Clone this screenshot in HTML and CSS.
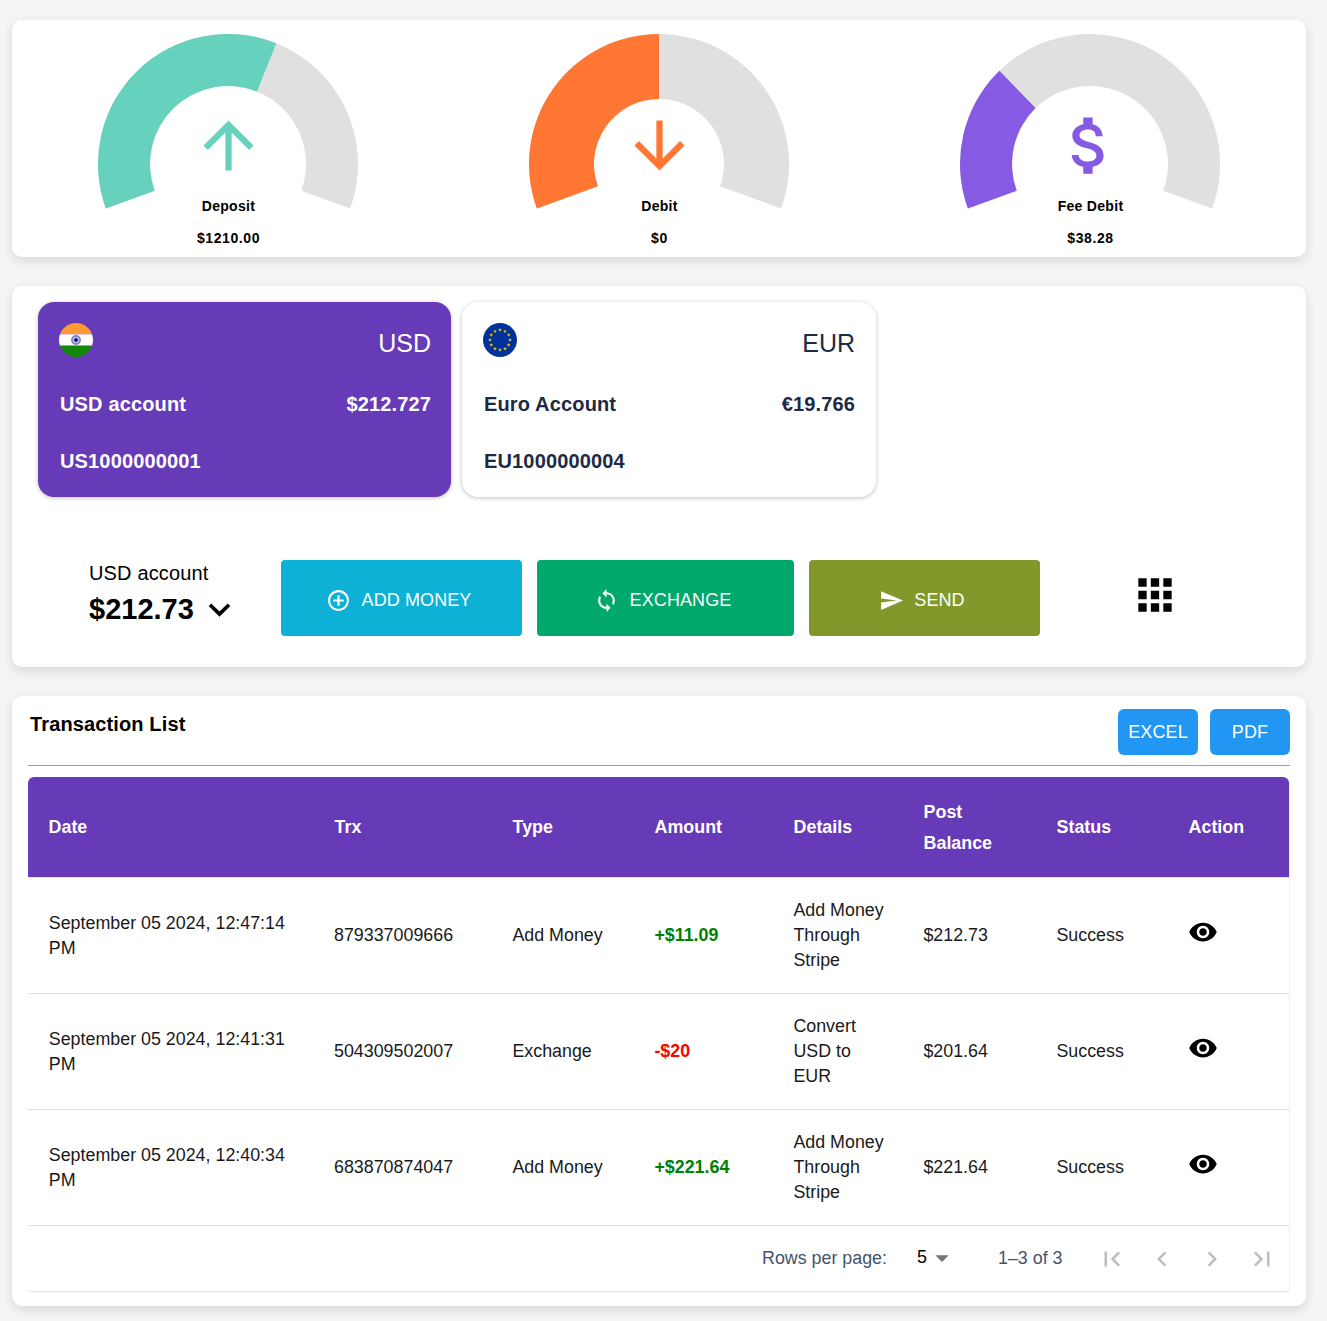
FILE: index.html
```html
<!DOCTYPE html>
<html lang="en">
<head>
<meta charset="utf-8">
<title>Dashboard</title>
<link rel="stylesheet" href="styles.css">
</head>
<body>
<main class="page">
  <section class="card gauges">
    <div class="gauge">
      <svg class="gauge-svg" viewBox="0 0 260 175" width="260" height="175">
        <path class="track" d="M7.84 174.46A130 130 0 1 1 252.16 174.46L203.3 156.68A78 78 0 1 0 56.7 156.68Z"/>
        <path class="fill-teal" d="M7.84 174.46A130 130 0 0 1 178.3 9.3L158.96 57.6A78 78 0 0 0 56.7 156.68Z"/>
      </svg>
      <svg class="gauge-icon icon-teal" viewBox="0 0 24 24"><path d="M4 12l1.41 1.41L11 7.83V20h2V7.83l5.58 5.59L20 12l-8-8-8 8z"/></svg>
      <p class="gauge-label">Deposit</p>
      <p class="gauge-value">$1210.00</p>
    </div>
    <div class="gauge">
      <svg class="gauge-svg" viewBox="0 0 260 175" width="260" height="175">
        <path class="track" d="M7.84 174.46A130 130 0 1 1 252.16 174.46L191.08 152.23A65 65 0 1 0 68.92 152.23Z"/>
        <path class="fill-orange" d="M7.84 174.46A130 130 0 0 1 130 0L130 65A65 65 0 0 0 68.92 152.23Z"/>
      </svg>
      <svg class="gauge-icon icon-orange" viewBox="0 0 24 24"><path d="M20 12l-1.41-1.41L13 16.17V4h-2v12.17l-5.58-5.59L4 12l8 8 8-8z"/></svg>
      <p class="gauge-label">Debit</p>
      <p class="gauge-value">$0</p>
    </div>
    <div class="gauge">
      <svg class="gauge-svg" viewBox="0 0 260 175" width="260" height="175">
        <path class="track" d="M7.84 174.46A130 130 0 1 1 252.16 174.46L203.3 156.68A78 78 0 1 0 56.7 156.68Z"/>
        <path class="fill-purple" d="M7.84 174.46A130 130 0 0 1 39.4 36.8L75.6 74.1A78 78 0 0 0 56.7 156.68Z"/>
      </svg>
      <svg class="gauge-icon icon-purple" viewBox="0 0 24 24"><path d="M11.8 10.9c-2.27-.59-3-1.2-3-2.15 0-1.09 1.01-1.85 2.7-1.85 1.78 0 2.44.85 2.5 2.1h2.21c-.07-1.72-1.12-3.3-3.21-3.81V3h-3v2.16c-1.94.42-3.5 1.68-3.5 3.61 0 2.31 1.91 3.46 4.7 4.13 2.5.6 3 1.48 3 2.41 0 .69-.49 1.79-2.7 1.79-2.06 0-2.87-.92-2.98-2.1h-2.2c.12 2.19 1.76 3.42 3.68 3.83V21h3v-2.15c1.95-.37 3.5-1.5 3.5-3.55 0-2.84-2.43-3.81-4.7-4.4z"/></svg>
      <p class="gauge-label">Fee Debit</p>
      <p class="gauge-value">$38.28</p>
    </div>
  </section>

  <section class="card wallet">
    <div class="accounts">
      <article class="account account-active">
        <div class="account-top">
          <svg class="flag" viewBox="0 0 34 34">
            <defs><clipPath id="flag-in"><circle cx="17" cy="17" r="17"/></clipPath></defs>
            <g clip-path="url(#flag-in)">
              <rect width="34" height="11.3" fill="#ff9933"/>
              <rect y="11.3" width="34" height="11.4" fill="#ffffff"/>
              <rect y="22.7" width="34" height="11.3" fill="#138808"/>
            </g>
            <circle cx="17" cy="17" r="4.9" fill="#7f7fc4"/>
            <circle cx="17" cy="17" r="3.3" fill="#b8b8e0"/>
            <circle cx="17" cy="17" r="1.8" fill="#000080"/>
          </svg>
          <span class="account-code">USD</span>
        </div>
        <div class="account-row"><span>USD account</span><span>$212.727</span></div>
        <div class="account-row account-number"><span>US1000000001</span></div>
      </article>
      <article class="account account-plain">
        <div class="account-top">
          <svg class="flag" viewBox="0 0 34 34">
            <defs><polygon id="eu-star" points="0,-2 .47,-.65 1.9,-.62 .76,.25 1.18,1.62 0,.8 -1.18,1.62 -.76,.25 -1.9,-.62 -.47,-.65"/></defs>
            <circle cx="17" cy="17" r="17" fill="#003399"/>
            <g fill="#ffcc00">
              <use href="#eu-star" x="17" y="7"/><use href="#eu-star" x="22" y="8.3"/><use href="#eu-star" x="25.7" y="12"/>
              <use href="#eu-star" x="27" y="17"/><use href="#eu-star" x="25.7" y="22"/><use href="#eu-star" x="22" y="25.7"/>
              <use href="#eu-star" x="17" y="27"/><use href="#eu-star" x="12" y="25.7"/><use href="#eu-star" x="8.3" y="22"/>
              <use href="#eu-star" x="7" y="17"/><use href="#eu-star" x="8.3" y="12"/><use href="#eu-star" x="12" y="8.3"/>
            </g>
          </svg>
          <span class="account-code">EUR</span>
        </div>
        <div class="account-row"><span>Euro Account</span><span>€19.766</span></div>
        <div class="account-row account-number"><span>EU1000000004</span></div>
      </article>
    </div>
    <div class="actions">
      <div class="balance">
        <div class="balance-name">USD account</div>
        <div class="balance-amount">$212.73
          <svg class="balance-chevron" viewBox="0 0 24 24"><path d="M7.41 8.59 12 13.17l4.59-4.58L18 10l-6 6-6-6z"/></svg>
        </div>
      </div>
      <button class="action action-add" type="button">
        <svg class="action-icon" viewBox="0 0 24 24"><path d="M13 7h-2v4H7v2h4v4h2v-4h4v-2h-4V7zm-1-5C6.48 2 2 6.48 2 12s4.48 10 10 10 10-4.48 10-10S17.52 2 12 2zm0 18c-4.41 0-8-3.59-8-8s3.59-8 8-8 8 3.59 8 8-3.59 8-8 8z"/></svg>
        <span>ADD MONEY</span>
      </button>
      <button class="action action-exchange" type="button">
        <svg class="action-icon" viewBox="0 0 24 24"><path d="M12 4V1L8 5l4 4V6c3.31 0 6 2.69 6 6 0 1.01-.25 1.97-.7 2.8l1.46 1.46C19.54 15.03 20 13.57 20 12c0-4.42-3.58-8-8-8zm0 14c-3.31 0-6-2.69-6-6 0-1.01.25-1.97.7-2.8L5.24 7.74C4.46 8.97 4 10.43 4 12c0 4.42 3.58 8 8 8v3l4-4-4-4v3z"/></svg>
        <span>EXCHANGE</span>
      </button>
      <button class="action action-send" type="button">
        <svg class="action-icon" viewBox="0 0 24 24"><path d="M2.01 21 23 12 2.01 3 2 10l15 2-15 2z"/></svg>
        <span>SEND</span>
      </button>
      <svg class="apps" viewBox="0 0 24 24"><path d="M4 8h4V4H4v4zm6 12h4v-4h-4v4zm-6 0h4v-4H4v4zm0-6h4v-4H4v4zm6 0h4v-4h-4v4zm6-10v4h4V4h-4zm-6 4h4V4h-4v4zm6 6h4v-4h-4v4zm0 6h4v-4h-4v4z"/></svg>
    </div>
  </section>

  <section class="card transactions">
    <header class="tx-head">
      <h2 class="tx-title">Transaction List</h2>
      <div class="tx-export">
        <button class="export" type="button">EXCEL</button>
        <button class="export" type="button">PDF</button>
      </div>
    </header>
    <div class="tx-table-wrap">
      <table class="tx-table">
        <colgroup>
          <col class="c-date"><col class="c-trx"><col class="c-type"><col class="c-amount"><col class="c-details"><col class="c-post"><col class="c-status"><col class="c-action">
        </colgroup>
        <thead>
          <tr><th>Date</th><th>Trx</th><th>Type</th><th>Amount</th><th>Details</th><th class="th-post">Post Balance</th><th>Status</th><th>Action</th></tr>
        </thead>
        <tbody>
          <tr>
            <td class="td-date">September 05 2024, 12:47:14 PM</td><td class="td-trx">879337009666</td><td>Add Money</td><td class="pos">+$11.09</td><td>Add Money Through Stripe</td><td>$212.73</td><td>Success</td>
            <td class="td-action"><svg class="eye" viewBox="0 0 24 24"><path d="M12 4.5C7 4.5 2.73 7.61 1 12c1.73 4.39 6 7.5 11 7.5s9.27-3.11 11-7.5c-1.73-4.39-6-7.5-11-7.5zM12 17c-2.76 0-5-2.24-5-5s2.24-5 5-5 5 2.24 5 5-2.24 5-5 5zm0-8c-1.66 0-3 1.34-3 3s1.34 3 3 3 3-1.34 3-3-1.34-3-3-3z"/></svg></td>
          </tr>
          <tr>
            <td class="td-date">September 05 2024, 12:41:31 PM</td><td class="td-trx">504309502007</td><td>Exchange</td><td class="neg">-$20</td><td>Convert USD to EUR</td><td>$201.64</td><td>Success</td>
            <td class="td-action"><svg class="eye" viewBox="0 0 24 24"><path d="M12 4.5C7 4.5 2.73 7.61 1 12c1.73 4.39 6 7.5 11 7.5s9.27-3.11 11-7.5c-1.73-4.39-6-7.5-11-7.5zM12 17c-2.76 0-5-2.24-5-5s2.24-5 5-5 5 2.24 5 5-2.24 5-5 5zm0-8c-1.66 0-3 1.34-3 3s1.34 3 3 3 3-1.34 3-3-1.34-3-3-3z"/></svg></td>
          </tr>
          <tr>
            <td class="td-date">September 05 2024, 12:40:34 PM</td><td class="td-trx">683870874047</td><td>Add Money</td><td class="pos">+$221.64</td><td>Add Money Through Stripe</td><td>$221.64</td><td>Success</td>
            <td class="td-action"><svg class="eye" viewBox="0 0 24 24"><path d="M12 4.5C7 4.5 2.73 7.61 1 12c1.73 4.39 6 7.5 11 7.5s9.27-3.11 11-7.5c-1.73-4.39-6-7.5-11-7.5zM12 17c-2.76 0-5-2.24-5-5s2.24-5 5-5 5 2.24 5 5-2.24 5-5 5zm0-8c-1.66 0-3 1.34-3 3s1.34 3 3 3 3-1.34 3-3-1.34-3-3-3z"/></svg></td>
          </tr>
        </tbody>
      </table>
      <div class="pager">
        <span class="pager-label">Rows per page:</span>
        <span class="pager-select"><span class="pager-num">5</span><svg class="pager-caret" viewBox="0 0 24 24"><path d="M7 10l5 5 5-5z"/></svg></span>
        <span class="pager-range">1–3 of 3</span>
        <div class="pager-nav">
          <svg class="pager-icon" viewBox="0 0 24 24"><path d="M18.41 16.59 13.82 12l4.59-4.59L17 6l-6 6 6 6zM6 6h2v12H6z"/></svg>
          <svg class="pager-icon" viewBox="0 0 24 24"><path d="M15.41 7.41 14 6l-6 6 6 6 1.41-1.41L10.83 12z"/></svg>
          <svg class="pager-icon" viewBox="0 0 24 24"><path d="M10 6 8.59 7.41 13.17 12l-4.58 4.59L10 18l6-6z"/></svg>
          <svg class="pager-icon" viewBox="0 0 24 24"><path d="M5.59 7.41 10.18 12l-4.59 4.59L7 18l6-6-6-6zM16 6h2v12h-2z"/></svg>
        </div>
      </div>
    </div>
  </section>
</main>
</body>
</html>
```
FILE: styles.css
```css
* { box-sizing: border-box; }
html, body { margin: 0; padding: 0; }
body {
  background: #f5f5f5;
  font-family: "Liberation Sans", Arial, sans-serif;
  color: #1a1a1a;
}
.page {
  width: 1294px;
  margin-left: 12px;
  padding: 20px 0 15px;
  display: flex;
  flex-direction: column;
  gap: 29px;
}
.card {
  background: #fff;
  border-radius: 10px;
  box-shadow: 0 4px 12px rgba(0, 0, 0, .12);
}

/* gauges */
.gauges {
  display: grid;
  grid-template-columns: repeat(3, 431px);
  padding: 0 1px;
  height: 237px;
}
.gauge {
  position: relative;
  display: flex;
  flex-direction: column;
  align-items: center;
  padding-top: 13.5px;
}
.gauge-svg { display: block; flex: none; margin-left: -1px; }
.track { fill: #e0e0e0; }
.fill-teal { fill: #66d1bd; }
.fill-orange { fill: #ff7733; }
.fill-purple { fill: #875ae4; }
.gauge-icon {
  position: absolute;
  left: 50%;
  top: 88px;
  width: 75px;
  height: 75px;
  margin-left: -37.5px;
}
.icon-teal { fill: #66d1bd; }
.icon-orange { fill: #ff7733; }
.icon-purple { fill: #875ae4; margin-left: -39px; }
.gauge-label, .gauge-value {
  margin: 0;
  color: #000;
  font-size: 14px;
  font-weight: 700;
  line-height: 16px;
  position: absolute;
}
.gauge-label { top: 178px; letter-spacing: .3px; }
.gauge-value { top: 210px; letter-spacing: .6px; }

/* wallet */
.wallet {
  height: 381px;
  padding: 16px 26px 0;
}
.accounts {
  display: grid;
  grid-template-columns: 413px 414px;
  gap: 11px;
}
.account {
  height: 195px;
  padding: 21px 20px 0 21px;
  border-radius: 16px;
  background: #fff;
  color: #1e2a44;
  box-shadow: 0 1px 4px rgba(0, 0, 0, .25);
}
.account-plain { padding-right: 21px; }
.account-active { background: #673ab7; color: #fff; }
.account-top {
  display: flex;
  justify-content: space-between;
  align-items: flex-start;
  height: 34px;
}
.flag { width: 34px; height: 34px; display: block; }
.account-code { font-size: 25px; line-height: 40px; }
.account-row {
  display: flex;
  justify-content: space-between;
  margin-top: 36px;
  padding-left: 1px;
  font-size: 20px;
  font-weight: 700;
  line-height: 23px;
  letter-spacing: .15px;
}
.account-number { margin-top: 34px; }

.actions {
  display: flex;
  align-items: center;
  margin-top: 63px;
  height: 76px;
}
.balance {
  align-self: flex-start;
  width: 243px;
  padding-left: 51px;
  flex: none;
  color: #000;
}
.balance-name { font-size: 20px; line-height: 26px; letter-spacing: .15px; }
.balance-amount {
  display: flex;
  align-items: center;
  font-size: 29px;
  font-weight: 700;
  line-height: 46px;
  gap: 4px;
}
.balance-chevron { width: 43px; height: 43px; fill: #000; }
.action {
  height: 76px;
  border: 0;
  border-radius: 4px;
  color: #fff;
  font: 400 18px "Liberation Sans", Arial, sans-serif;
  letter-spacing: .1px;
  display: flex;
  align-items: center;
  justify-content: center;
  gap: 10px;
  margin-right: 15px;
  padding: 4px 5px 0 0;
}
.action-add { width: 241px; background: #0db1d6; gap: 11px; padding-right: 6px; }
.action-exchange { width: 257px; background: #00a86b; gap: 11px; padding-right: 6px; }
.action-send { width: 231px; background: #82982a; }
.action-icon { width: 25px; height: 25px; fill: #fff; }
.apps { width: 50px; height: 50px; margin: 0 0 6px 75px; flex: none; fill: #000; }

/* transactions */
.transactions {
  height: 610px;
  padding: 13px 16px 0;
}
.tx-head {
  display: flex;
  justify-content: space-between;
  align-items: flex-start;
  height: 57px;
  border-bottom: 1px solid #9e9e9e;
}
.tx-title {
  margin: 2px 0 0 2px;
  font-size: 20px;
  font-weight: 700;
  line-height: 26px;
  letter-spacing: .13px;
  color: #000;
}
.tx-export { display: flex; gap: 12px; }
.export {
  width: 80px;
  height: 46px;
  border: 0;
  border-radius: 6px;
  background: #2196f3;
  color: #fff;
  font: 400 18px "Liberation Sans", Arial, sans-serif;
  letter-spacing: .1px;
  padding: 0;
}
.tx-table-wrap {
  width: 1262px;
  margin-top: 11px;
  border-right: 1px solid #eeeeee;
  border-bottom: 1px solid #e0e0e0;
  border-radius: 0 6px 4px 4px;
}
.tx-table {
  width: 1261px;
  border-collapse: collapse;
  table-layout: fixed;
  font-size: 17.85px;
}
.c-date { width: 286px; }
.c-trx { width: 178px; }
.c-type { width: 142px; }
.c-amount { width: 139px; }
.c-details { width: 130px; }
.c-post { width: 133px; }
.c-status { width: 132px; }
.c-action { width: 121px; }
.tx-table thead tr { height: 100px; background: #673ab7; color: #fff; }
.tx-table th {
  padding: 0 16px 0 20.6px;
  text-align: left;
  font-weight: 700;
  line-height: 31px;
}
.tx-table th.th-post { padding-top: 1px; }
.tx-table th:first-child { border-radius: 6px 0 0 0; }
.tx-table th:last-child { border-radius: 0 6px 0 0; }
.tx-table tbody tr { height: 116px; border-bottom: 1px solid #e0e0e0; }
.tx-table tbody tr:first-child td { box-shadow: inset 0 1px 0 #e8e8e8; }
.tx-table td {
  padding: 0 16px 0 20.4px;
  line-height: 25px;
  color: #1a1a1a;
}
.tx-table tbody tr:first-child td:not(.td-date):not(.td-action) { padding-top: 2px; }
.tx-table td.td-date { padding-left: 20.8px; padding-top: 2px; }
.tx-table td.td-trx { padding-left: 20px; }
.tx-table td.td-action { padding-left: 20px; }
.tx-table td.pos { color: #008000; font-weight: 700; }
.tx-table td.neg { color: #ff0000; font-weight: 700; }
.eye { display: block; width: 30px; height: 30px; margin-top: -6px; fill: #000; }
.pager {
  height: 65px;
  display: flex;
  align-items: center;
  font-size: 17.85px;
  color: #44546a;
}
.pager-label { margin-left: 734px; width: 155px; }
.pager-select { display: flex; align-items: center; color: #000; width: 81px; }
.pager-num { margin-top: -2px; }
.pager-caret { width: 32px; height: 32px; margin-left: -1px; fill: #757575; }
.pager-range { width: 88px; }
.pager-nav { display: flex; gap: 20px; margin: 2px 0 0 11px; }
.pager-icon { width: 30px; height: 30px; fill: rgba(0, 0, 0, .26); }
```
